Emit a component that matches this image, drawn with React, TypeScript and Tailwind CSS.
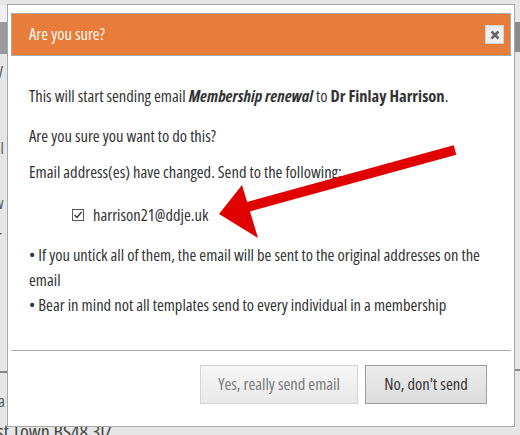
import React from "react";

const font = { fontFamily: '"Open Sans", "Noto Sans", sans-serif' };

function Arrow() {
  return (
    <svg
      className="absolute left-0 top-0 pointer-events-none"
      width={520}
      height={435}
      viewBox="0 0 520 435"
    >
      <line x1={455} y1={150} x2={240} y2={209} stroke="#e00000" strokeWidth={10} />
      <polygon points="219,214 242,185 258,238" fill="#e00000" />
    </svg>
  );
}

export default function App() {
  return (
    <div
      className="relative w-[520px] h-[435px] overflow-hidden bg-[#e6e6e6] text-[#333] font-stretch-condensed"
      style={font}
    >
      {/* page behind the dialog */}
      <div className="absolute left-0 top-[5px] w-[7px] h-[17px] bg-[#f0f0f0]" />
      <div className="absolute left-0 top-[22px] w-[7px] h-[32px] bg-[#9a9a9a]" />
      <div className="absolute right-0 top-[22px] w-[5px] h-[30px] bg-[#8c8c8c]" />
      <div className="absolute left-0 top-[371px] w-[7px] h-[2px] bg-[#888]" />
      <div className="absolute right-0 top-[369px] w-[5px] h-[2px] bg-[#888]" />
      <span className="absolute left-[-4px] top-[60px] text-[16px] text-[#555]">V</span>
      <span className="absolute left-[-5px] top-[136px] text-[16px] text-[#555]">sl</span>
      <span className="absolute left-[-6px] top-[191px] text-[16px] text-[#555]">w</span>
      <span className="absolute left-[-3px] top-[224px] text-[16px] text-[#555]">r</span>
      <span className="absolute left-[-9px] top-[389px] text-[16px] text-[#555]">na</span>
      <span className="absolute left-[-3px] top-[420px] text-[20px] leading-[24px] text-[#444]">
        st Town BS48 3JZ
      </span>

      {/* dialog */}
      <div className="absolute left-[7px] top-[4px] w-[508px] h-[423px] bg-white border border-[#a8a8a8] px-[3px] pt-[8px] flex flex-col">
        <div className="h-[43px] bg-[#e87c3b] border border-[#a9a9a9] flex items-center justify-between pl-[17px] pr-[6px]">
          <span className="text-[16.5px] text-[#fff8ee]">Are you sure?</span>
          <button className="w-[19px] h-[19px] bg-[#efefef] border border-[#d2d2d2] flex items-center justify-center">
            <svg width="10" height="10" viewBox="0 0 10 10">
              <path d="M1.5 1.5 L8.5 8.5 M8.5 1.5 L1.5 8.5" stroke="#666" strokeWidth="2.6" />
            </svg>
          </button>
        </div>

        <div className="pl-[18px] pr-[14px] pt-[28px] text-[16.5px] leading-[24px] flex-1">
          <p>
            This will start sending email <b className="italic">Membership renewal</b> to{" "}
            <b>Dr Finlay Harrison</b>.
          </p>
          <p className="mt-[16px]">Are you sure you want to do this?</p>
          <p className="mt-[12px]">Email address(es) have changed. Send to the following:</p>
          <label className="mt-[19px] ml-[43px] flex items-center gap-[9px]">
            <span className="w-[12px] h-[12px] border border-[#555] bg-white flex items-center justify-center">
              <svg width="10" height="10" viewBox="0 0 10 10">
                <path d="M1.5 5 L4 7.5 L8.5 2" stroke="#333" strokeWidth="1.4" fill="none" />
              </svg>
            </span>
            harrison21@ddje.uk
          </label>
          <div className="mt-[15px] leading-[25px]">
            <p>
              • If you untick all of them, the email will be sent to the original addresses on
              the email
            </p>
            <p>• Bear in mind not all templates send to every individual in a membership</p>
          </div>
        </div>

        <div className="border-t border-[#ababab] h-[76px] flex items-start justify-end gap-[7px] pr-[24px] pt-[14px]">
          <button
            disabled
            className="w-[158px] h-[39px] text-[16.5px] text-[#7a7a7a] border border-[#d4d4d4] bg-gradient-to-b from-[#f6f6f6] to-[#e9e9e9]"
          >
            Yes, really send email
          </button>
          <button className="w-[122px] h-[39px] text-[16.5px] text-[#333] border border-[#9c9c9c] bg-gradient-to-b from-[#ececec] to-[#dcdcdc]">
            No, don't send
          </button>
        </div>
      </div>

      <Arrow />
    </div>
  );
}
